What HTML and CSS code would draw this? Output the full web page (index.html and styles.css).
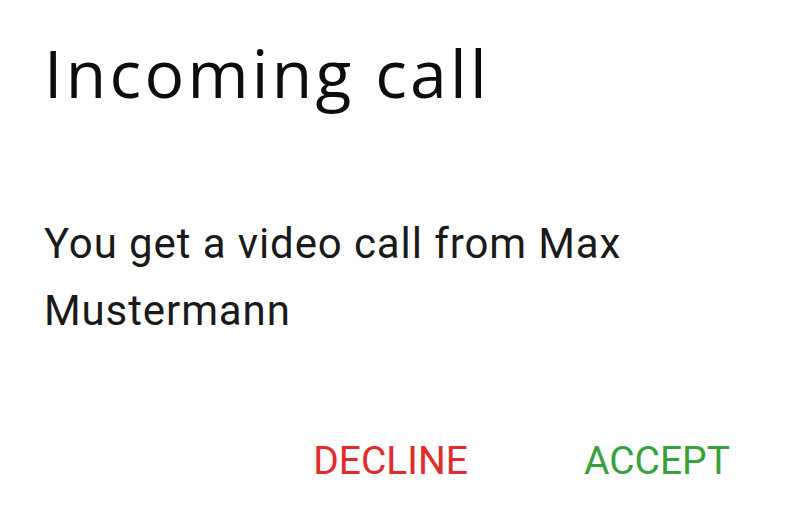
FILE: index.html
```html
<!DOCTYPE html>
<html lang="en">
<head>
    <meta charset="UTF-8">
    <meta name="viewport" content="width=device-width, initial-scale=1.0">
    <title>Incoming call</title>
    <link rel="stylesheet" href="styles.css">
</head>
<body>
    <div class="dialog">
        <div class="dialog-title">Incoming call</div>
        <p class="dialog-message">You get a video call from Max Mustermann</p>
        <div class="dialog-actions">
            <button class="action decline">Decline</button>
            <button class="action accept">Accept</button>
        </div>
    </div>
</body>
</html>
```

FILE: styles.css
```css
body, html {
    margin: 0;
    padding: 0;
    height: 100%;
    background: #ffffff;
    overflow: hidden;
}
.dialog {
    padding: 27px 42px 0 44px;
    display: flex;
    flex-direction: column;
}
.dialog-title {
    font-family: "Open Sans", sans-serif;
    font-size: 66px;
    letter-spacing: 3.3px;
    color: #0d0d0d;
    line-height: 90px;
}
.dialog-message {
    font-family: Roboto, sans-serif;
    font-size: 42px;
    letter-spacing: 0.9px;
    line-height: 67px;
    color: #1a1a1a;
    margin: 93px 0 0 0;
    max-width: 640px;
}
.dialog-actions {
    display: flex;
    justify-content: flex-end;
    gap: 116px;
    margin-top: 94px;
    padding-right: 28px;
}
.action {
    font-family: Roboto, sans-serif;
    font-size: 39px;
    line-height: normal;
    text-transform: uppercase;
    background: none;
    border: none;
    padding: 0;
    cursor: pointer;
}
.decline {
    color: #e32b2b;
}
.accept {
    color: #37a23d;
}
```
